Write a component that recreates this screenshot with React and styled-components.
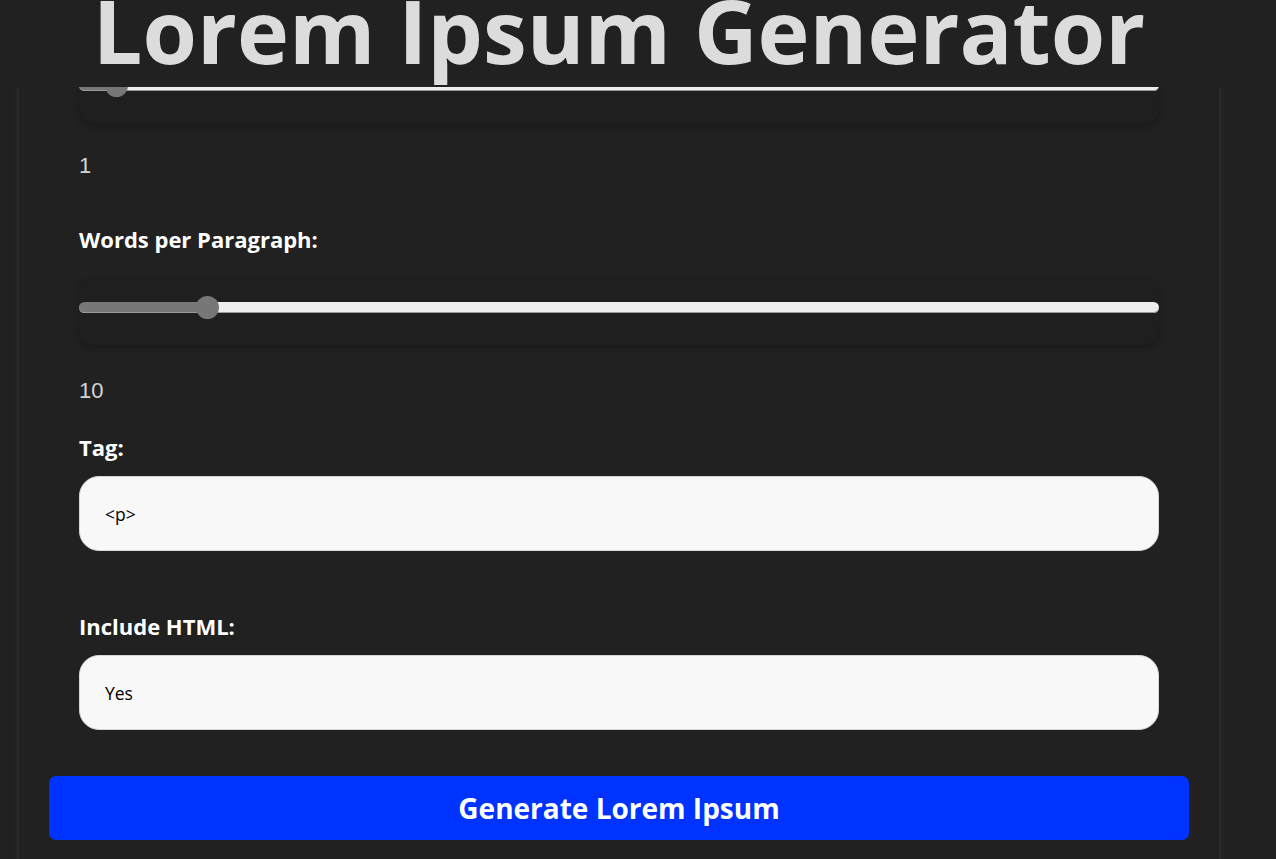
import React from 'react';
import styled, { createGlobalStyle } from 'styled-components';

const GlobalStyle = createGlobalStyle`
  html, body {
    margin: 0;
    padding: 0;
    background: #212121;
  }
  body {
    font-family: "Open Sans", Lato, sans-serif;
    overflow: hidden;
  }
`;

const Header = styled.header`
  position: fixed;
  top: 0;
  left: 0;
  right: 0;
  height: 87px;
  background: #212121;
  z-index: 10;
  overflow: hidden;
`;

const HeaderInner = styled.div`
  width: 1200px;
  margin-left: 19px;
  display: flex;
  justify-content: center;
`;

const Title = styled.h1`
  margin: -14px 0 0 0;
  font-size: 88px;
  line-height: 1;
  font-weight: 700;
  color: #dcdcdc;
  white-space: nowrap;
`;

const Container = styled.div`
  width: 1200px;
  margin-left: 19px;
  box-sizing: border-box;
  padding: 56px 30px 60px;
  background: #212121;
  box-shadow: 0 0 7px rgba(255, 255, 255, 0.09);
  min-height: 1000px;
`;

const Form = styled.form`
  display: flex;
  flex-direction: column;
  padding: 0 30px;
`;

const SliderBox = styled.div`
  background: #1f1f1f;
  border-radius: 14px;
  box-shadow: 0 3px 6px rgba(0, 0, 0, 0.25);
  padding: 18px 0 26px;
  margin-top: ${p => p.$top || 0}px;
`;

const Range = styled.input.attrs({ type: 'range' })`
  -webkit-appearance: none;
  appearance: none;
  display: block;
  width: 100%;
  height: 23px;
  margin: 0;
  background: transparent;

  &::-webkit-slider-runnable-track {
    height: 11px;
    border-radius: 6px;
    background: linear-gradient(to right, #777 var(--fill), #eee var(--fill));
    box-shadow: inset 0 -1px 0 #9a9a9a;
  }

  &::-webkit-slider-thumb {
    -webkit-appearance: none;
    width: 23px;
    height: 23px;
    border: none;
    border-radius: 50%;
    background: #777;
    margin-top: -6px;
  }
`;

const Value = styled.p`
  margin: ${p => p.$top}px 0 0;
  font-family: "Liberation Sans", Arial, sans-serif;
  font-size: 22px;
  line-height: 25px;
  color: #d4d4d4;
`;

const Label = styled.label`
  display: block;
  margin-top: ${p => p.$top}px;
  font-size: 22px;
  line-height: 26px;
  font-weight: 700;
  color: #ffffff;
`;

const Field = styled.div`
  margin-top: 16px;
  height: 75px;
  box-sizing: border-box;
  border: 1px solid #d6d6d6;
  border-radius: 20px;
  background: #f8f8f8;
  display: flex;
  align-items: center;
  padding-left: 25px;
  font-size: 17.5px;
  color: #000;
`;

const Button = styled.button`
  display: block;
  width: 100%;
  height: 64px;
  margin-top: 46px;
  border: none;
  border-radius: 7px;
  background: #0033ff;
  color: #fff;
  font-family: "Open Sans", Lato, sans-serif;
  font-size: 28px;
  font-weight: 700;
  cursor: pointer;
`;

const Slider = ({ value, max, top }) => {
  const f = value / max;
  return (
    <SliderBox $top={top}>
      <Range
        min={0}
        max={max}
        defaultValue={value}
        style={{ '--fill': `calc(11.5px + ${f} * (100% - 23px))` }}
      />
    </SliderBox>
  );
};

const App = () => {
  return (
    <>
      <GlobalStyle />
      <Header>
        <HeaderInner>
          <Title>Lorem Ipsum Generator</Title>
        </HeaderInner>
      </Header>
      <Container>
        <Form onSubmit={e => e.preventDefault()}>
          <Slider value={1} max={40} />
          <Value $top={30}>1</Value>

          <Label $top={48}>Words per Paragraph:</Label>
          <Slider value={10} max={90} top={26} />
          <Value $top={33}>10</Value>

          <Label $top={31}>Tag:</Label>
          <Field>&lt;p&gt;</Field>

          <Label $top={62}>Include HTML:</Label>
          <Field>Yes</Field>
        </Form>
        <Button type="button">Generate Lorem Ipsum</Button>
      </Container>
    </>
  );
};

export default App;
